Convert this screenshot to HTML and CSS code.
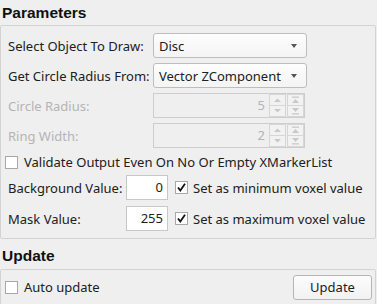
FILE: index.html
```html
<!DOCTYPE html>
<html>
<head>
<meta charset="utf-8">
<link rel="stylesheet" href="styles.css">
</head>
<body>
<div class="panel">
  <div class="heading">Parameters</div>
  <div class="group params">
    <div class="row">
      <span class="label">Select Object To Draw:</span>
      <div class="combo"><span>Disc</span><span class="arrow"></span></div>
    </div>
    <div class="row">
      <span class="label">Get Circle Radius From:</span>
      <div class="combo"><span>Vector ZComponent</span><span class="arrow"></span></div>
    </div>
    <div class="row">
      <span class="label disabled">Circle Radius:</span>
      <div class="spin">
        <span class="spin-value">5</span>
        <div class="spin-col">
          <span class="spin-btn"><svg width="9" height="6" viewBox="0 0 9 6"><path d="M1 5 L4.5 1.5 L8 5 Z" fill="#c9c9c9"/></svg></span>
          <span class="spin-btn"><svg width="9" height="6" viewBox="0 0 9 6"><path d="M1 1 L4.5 4.5 L8 1 Z" fill="#c9c9c9"/></svg></span>
        </div>
        <div class="spin-col">
          <span class="spin-btn"><svg width="9" height="8" viewBox="0 0 9 8"><rect x="1" y="0.5" width="7" height="1.3" fill="#c9c9c9"/><path d="M1 7 L4.5 3 L8 7 Z" fill="#c9c9c9"/></svg></span>
          <span class="spin-btn"><svg width="9" height="8" viewBox="0 0 9 8"><path d="M1 1 L4.5 5 L8 1 Z" fill="#c9c9c9"/><rect x="1" y="6.2" width="7" height="1.3" fill="#c9c9c9"/></svg></span>
        </div>
      </div>
    </div>
    <div class="row">
      <span class="label disabled">Ring Width:</span>
      <div class="spin">
        <span class="spin-value">2</span>
        <div class="spin-col">
          <span class="spin-btn"><svg width="9" height="6" viewBox="0 0 9 6"><path d="M1 5 L4.5 1.5 L8 5 Z" fill="#c9c9c9"/></svg></span>
          <span class="spin-btn"><svg width="9" height="6" viewBox="0 0 9 6"><path d="M1 1 L4.5 4.5 L8 1 Z" fill="#c9c9c9"/></svg></span>
        </div>
        <div class="spin-col">
          <span class="spin-btn"><svg width="9" height="8" viewBox="0 0 9 8"><rect x="1" y="0.5" width="7" height="1.3" fill="#c9c9c9"/><path d="M1 7 L4.5 3 L8 7 Z" fill="#c9c9c9"/></svg></span>
          <span class="spin-btn"><svg width="9" height="8" viewBox="0 0 9 8"><path d="M1 1 L4.5 5 L8 1 Z" fill="#c9c9c9"/><rect x="1" y="6.2" width="7" height="1.3" fill="#c9c9c9"/></svg></span>
        </div>
      </div>
    </div>
    <div class="check-row">
      <span class="checkbox"></span>
      <span>Validate Output Even On No Or Empty XMarkerList</span>
    </div>
    <div class="row">
      <span class="label short">Background Value:</span>
      <div class="num">0</div>
      <span class="checkbox checked"><svg width="11" height="11" viewBox="0 0 11 11"><path d="M2 5.5 L4.3 8.5 L9 1.8" fill="none" stroke="#111" stroke-width="1.8"/></svg></span>
      <span class="check-text">Set as minimum voxel value</span>
    </div>
    <div class="row row-last">
      <span class="label short">Mask Value:</span>
      <div class="num">255</div>
      <span class="checkbox checked"><svg width="11" height="11" viewBox="0 0 11 11"><path d="M2 5.5 L4.3 8.5 L9 1.8" fill="none" stroke="#111" stroke-width="1.8"/></svg></span>
      <span class="check-text">Set as maximum voxel value</span>
    </div>
  </div>
  <div class="heading heading2">Update</div>
  <div class="group update">
    <div class="check-row auto">
      <span class="checkbox"></span>
      <span>Auto update</span>
    </div>
    <div class="button">Update</div>
  </div>
</div>
</body>
</html>
```
FILE: styles.css
```css
html, body {
  margin: 0;
  padding: 0;
  background: #efefef;
}
body {
  font-family: "Noto Sans", "Open Sans", sans-serif;
  font-size: 13px;
  color: #202020;
  width: 377px;
  height: 304px;
  overflow: hidden;
}
.panel {
  display: flex;
  flex-direction: column;
}
.heading {
  font-family: "Liberation Sans", Arial, sans-serif;
  font-weight: bold;
  font-size: 15.5px;
  line-height: 25px;
  height: 25px;
  padding-left: 2px;
  color: #111;
}
.heading2 {
  padding-top: 4px;
  padding-bottom: 1px;
}
.group {
  border: 1px solid #d3d3d3;
  border-radius: 2px;
  margin-right: 1px;
}
.params {
  padding: 7px 0 7px 7px;
  display: flex;
  flex-direction: column;
  gap: 5px;
}
.row {
  display: flex;
  align-items: center;
  height: 25px;
}
.row-last {
  margin-top: 1px;
}
.label {
  width: 145px;
  flex: none;
  white-space: nowrap;
}
.label.short {
  width: 118px;
}
.disabled {
  color: #b4b4b4;
}
.combo {
  height: 23px;
  border: 1px solid #bdbdbd;
  border-radius: 3px;
  background: linear-gradient(#fdfdfd, #f4f4f4);
  display: flex;
  align-items: center;
  justify-content: space-between;
  padding-left: 5px;
  padding-right: 9px;
  box-sizing: content-box;
  width: 138px;
}
.arrow {
  width: 0;
  height: 0;
  border-left: 3.5px solid transparent;
  border-right: 3.5px solid transparent;
  border-top: 4px solid #555;
}
.spin {
  width: 150px;
  height: 23px;
  border: 1px solid #cdcdcd;
  display: flex;
  align-items: stretch;
}
.spin-value {
  flex: 1;
  text-align: right;
  padding-right: 3px;
  line-height: 23px;
  color: #b4b4b4;
}
.spin-col {
  width: 17px;
  display: flex;
  flex-direction: column;
  margin-left: 1px;
}
.spin-btn {
  flex: 1;
  border: 1px solid #d6d6d6;
  background: #f2f2f2;
  display: flex;
  align-items: center;
  justify-content: center;
}
.spin-btn + .spin-btn {
  border-top: none;
}
.check-row {
  display: flex;
  align-items: center;
  gap: 6px;
  height: 20px;
  margin-left: -3px;
  margin-top: -1px;
  margin-bottom: -2px;
}
.checkbox {
  width: 13px;
  height: 13px;
  box-sizing: border-box;
  border: 1px solid #a8a8a8;
  background: #fff;
  flex: none;
  display: flex;
  align-items: center;
  justify-content: center;
}
.num {
  width: 36px;
  height: 23px;
  line-height: 23px;
  border: 1px solid #c8c8c8;
  background: #fff;
  text-align: right;
  padding-right: 4px;
  box-sizing: content-box;
}
.row .checkbox {
  margin-left: 7px;
}
.check-text {
  margin-left: 5px;
  white-space: nowrap;
}
.update {
  height: 34px;
  display: flex;
  align-items: center;
  justify-content: space-between;
  padding-right: 3px;
}
.check-row.auto {
  margin: 0 0 0 4px;
}
.button {
  width: 77px;
  height: 23px;
  border: 1px solid #b5b5b5;
  border-radius: 3px;
  background: linear-gradient(#fcfcfc, #f2f2f2);
  text-align: center;
  line-height: 23px;
}
```
